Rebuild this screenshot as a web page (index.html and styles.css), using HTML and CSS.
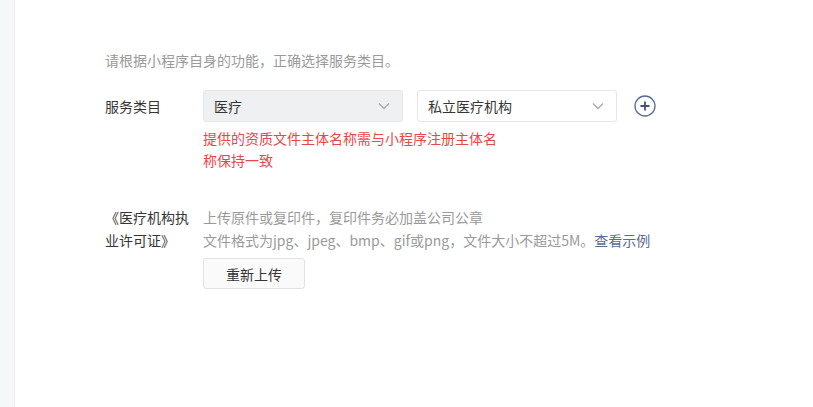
FILE: index.html
```html
<!DOCTYPE html>
<html lang="zh-CN">
<head>
  <meta charset="UTF-8">
  <meta name="viewport" content="width=device-width, initial-scale=1.0">
  <title>服务类目</title>
  <link rel="stylesheet" href="styles.css">
</head>
<body>
  <div class="page">
    <!-- 左侧边栏 -->
    <div class="sidebar"></div>

    <div class="main">
      <p class="tips">请根据小程序自身的功能，正确选择服务类目。</p>

      <div class="form-row">
        <label class="form-label label-inline">服务类目</label>
        <div class="form-body">
          <div class="select-group">
            <div class="select select-disabled">
              <span>医疗</span>
              <svg class="arrow" width="12" height="8" viewBox="0 0 12 8"><path d="M1 1.5l5 5 5-5" fill="none" stroke="#a9a9a9" stroke-width="1.3"/></svg>
            </div>
            <div class="select">
              <span>私立医疗机构</span>
              <svg class="arrow" width="12" height="8" viewBox="0 0 12 8"><path d="M1 1.5l5 5 5-5" fill="none" stroke="#a9a9a9" stroke-width="1.3"/></svg>
            </div>
            <svg class="add-btn" width="22" height="22" viewBox="0 0 22 22">
              <circle cx="11" cy="11" r="10" fill="none" stroke="#586a9a" stroke-width="1.3"/>
              <path d="M11 6.5v9M6.5 11h9" stroke="#3f5080" stroke-width="1.8"/>
            </svg>
          </div>
          <p class="error">提供的资质文件主体名称需与小程序注册主体名称保持一致</p>
        </div>
      </div>

      <div class="form-row upload-row">
        <label class="form-label">《医疗机构执业许可证》</label>
        <div class="form-body">
          <p class="desc">上传原件或复印件，复印件务必加盖公司公章</p>
          <p class="desc">文件格式为jpg、jpeg、bmp、gif或png，文件大小不超过5M。<a class="link" href="#">查看示例</a></p>
          <button class="btn">重新上传</button>
        </div>
      </div>
    </div>
  </div>
</body>
</html>
```

FILE: styles.css
```css
/* 页面基础 */
body {
  margin: 0;
  font-family: "Microsoft YaHei", "Noto Sans CJK SC", "Liberation Sans", sans-serif;
  font-size: 14px;
  color: #353535;
  background: #fff;
}

p {
  margin: 0;
}

.page {
  display: flex;
  min-height: 407px;
}

.sidebar {
  width: 14px;
  flex-shrink: 0;
  background: #f6f7f9;
  border-right: 1px solid #eaecef;
}

.main {
  flex: 1;
  padding: 49px 0 0 90px;
}

.tips {
  color: #9a9a9a;
  line-height: 22px;
  margin-bottom: 19px;
}

.form-row {
  display: flex;
}

.form-label {
  width: 88px;
  margin-right: 10px;
  flex-shrink: 0;
  line-height: 23px;
}

.label-inline {
  line-height: 32px;
}

.select-group {
  display: flex;
  align-items: center;
}

.select {
  width: 178px;
  height: 30px;
  padding: 0 10px;
  border: 1px solid #e4e6ea;
  border-radius: 3px;
  background: #fff;
  display: flex;
  align-items: center;
  justify-content: space-between;
  margin-right: 14px;
}

.select-disabled {
  background: #eff0f2;
}

.arrow {
  margin-right: 2px;
}

.add-btn {
  margin-left: 3px;
}

.error {
  width: 300px;
  color: #e8474a;
  line-height: 22px;
  margin-top: 5px;
}

.upload-row {
  margin-top: 35px;
}

.desc {
  color: #9a9a9a;
  line-height: 23px;
}

.link {
  color: #576b95;
  text-decoration: none;
}

.btn {
  margin-top: 6px;
  width: 102px;
  height: 31px;
  border: 1px solid #e2e2e2;
  border-radius: 3px;
  background: #fafafa;
  color: #353535;
  font-family: inherit;
  font-size: 14px;
  cursor: pointer;
}
```
